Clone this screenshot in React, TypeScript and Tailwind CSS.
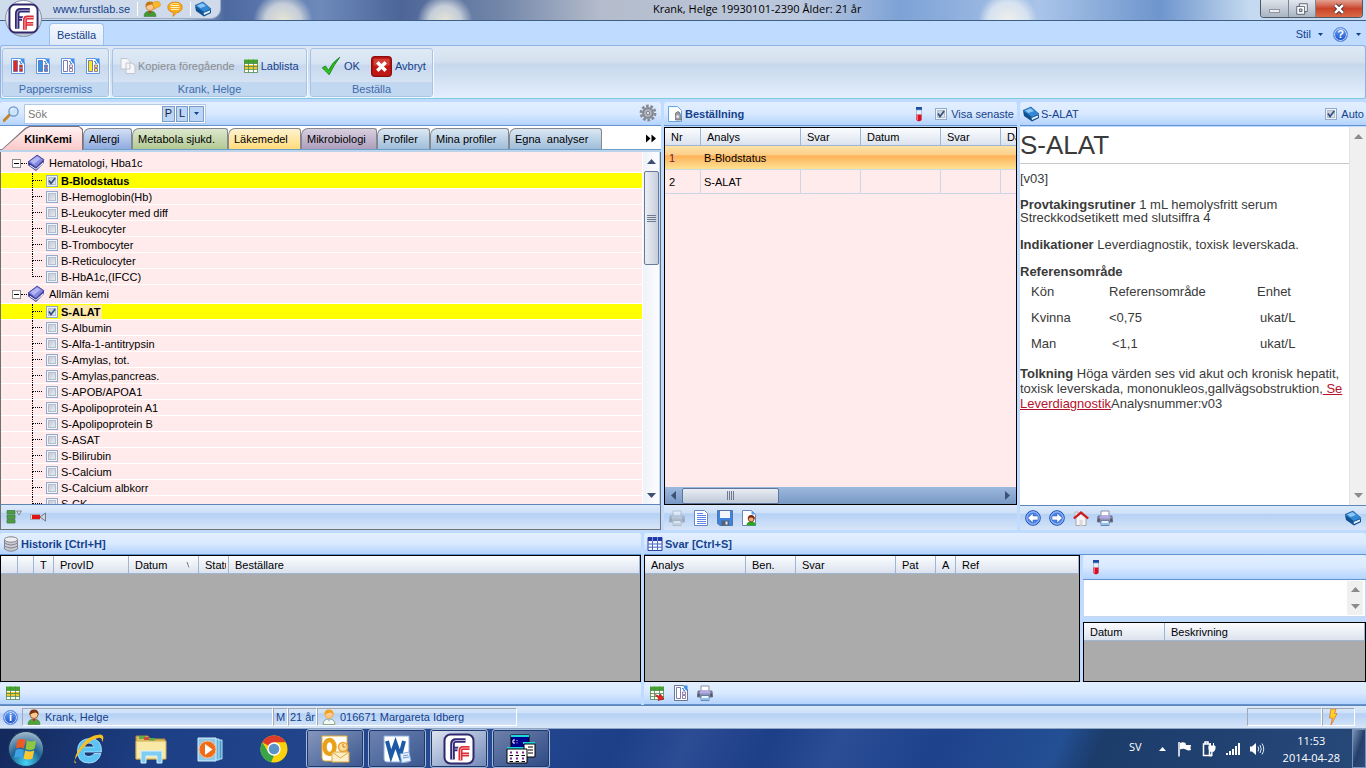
import { useState } from "react";
import type { ReactNode } from "react";

const barTop = "bg-gradient-to-b from-[#e3efff] via-[#d9e9ff] to-[#b3d3fe] border-b border-[#6593cf] rounded-t-[3px]";
const barFoot = "bg-[linear-gradient(#dbe9fb_0%,#cfe1f8_30%,#b5d1f5_36%,#d7e5f8_100%)]";
const headCell = "h-[18px] border-r border-b border-[#9eb6d3] bg-gradient-to-b from-[#fbfcfe] to-[#dce3ee] px-[6px] text-left font-normal";

function Svg({ size = 16, children, className = "" }: { size?: number; children: ReactNode; className?: string }) {
  return (
    <svg width={size} height={size} viewBox="0 0 16 16" className={"shrink-0 " + className} aria-hidden="true">
      {children}
    </svg>
  );
}

function FormIcon({ color, edge = "#5d97e0" }: { color: string; edge?: string }) {
  return (
    <Svg>
      <path d="M1.500 .5h9l4 4v11h-13z" fill="#fff" stroke={edge} />
      <path d="M3.500 2.500h4v11h-4z" fill={color} stroke="#6a6fae" strokeWidth=".9" />
      <path d="M9.500 7h3v2.500h-3zM9.500 10.500h3v3h-3z" fill={color} stroke="#8a6fa0" strokeWidth=".9" />
      <path d="M10 .5h4.500V6L12.500 5z" fill="#3f8ff0" />
      <path d="M9 3.500h1.500V5.500H12" fill="none" stroke="#4b86dd" />
    </Svg>
  );
}

function BookIcon({ dark = "#12518f", mid = "#3289d8", light = "#8cc8f7" }: { dark?: string; mid?: string; light?: string }) {
  return (
    <Svg>
      <path d="M0 5 8 9.500 16 9v3l-7 3.500L1 10z" fill={dark} />
      <path d="M8.500 11.500 15 9.500v1.700l-6 2.800z" fill="#e8f2fb" />
      <path d="M0 4.500 8 1l8 7-7 3.500z" fill={mid} stroke={dark} strokeWidth=".7" />
      <path d="M2 4.500 7.500 2.200 11 5 5.500 7z" fill={light} />
    </Svg>
  );
}

function CatalogIcon() {
  return (
    <Svg size={18}>
      <path d="M1 7 9 1l6 4v3l-7 7-7-5z" fill="#35378f" />
      <path d="M2.500 9.500 8 13l6.500-6v1.500L8 14l-5.500-3.500z" fill="#fff" />
      <path d="M1 7 9 1l6 4-7 7z" fill="#8589dc" stroke="#3d3fa0" strokeWidth=".8" />
      <path d="M3 6.500 9 2.200l3 2L6 9z" fill="#b3b6f2" />
    </Svg>
  );
}

function GridIcon({ arrow = false }: { arrow?: boolean }) {
  return (
    <Svg>
      <path d="M1 1.500h14v13H1z" fill="#fff" />
      <path d="M1 1.500h14v4H1z" fill="#43a52c" />
      {!arrow && <path d="M1 7h14v4H1z" fill="#f2c62e" />}
      <path d="M1 5.500h14M1 8.500h14M1 11.500h14M5.500 1.500v13M10.500 1.500v13M1.500 2v12M14.500 2v12M1 14.500h14" stroke="#4d8b4a" fill="none" strokeWidth=".8" />
      {arrow && <path d="M6 9.500 10 11l1.500-2L15 14l-6 1.500.5-2z" fill="#e8221c" stroke="#8e1513" strokeWidth=".5" />}
    </Svg>
  );
}

function TableIcon() {
  return (
    <Svg>
      <path d="M1 1.500h14v13H1z" fill="#f4f8ff" stroke="#2742a0" />
      <path d="M1 1.500h14v3.500H1z" fill="#2138a5" />
      <path d="M1 8h14M1 11.200h14M5.500 5v9.500M10.500 5v9.500" stroke="#4a68c0" />
      <path d="M5.500 1v4M10.500 1v4" stroke="#7b92dc" />
    </Svg>
  );
}

function TubeIcon() {
  return (
    <Svg>
      <path d="M5 1h6v3H5z" fill="#1c4fa4" />
      <path d="M5.500 4h5v10q-2.500 2.500-5 0z" fill="#e6f1fc" stroke="#94aac8" strokeWidth=".7" />
      <path d="M5.500 8.500h5v5.500q-2.500 2.500-5 0z" fill="#dc0d20" />
      <path d="M6.500 9v5" stroke="#f88" strokeWidth=".8" />
    </Svg>
  );
}

function PrinterIcon({ faded = false }: { faded?: boolean }) {
  return (
    <Svg className={faded ? "opacity-40 grayscale" : ""}>
      <path d="M4 1h8v6H4z" fill="#fff" stroke="#8b90a8" />
      <path d="M1 6h14l.5 6H.5z" fill="#8f93ae" stroke="#5d6078" strokeWidth=".8" />
      <path d="M3 5.500h10v3H3z" fill="#b3a9e8" />
      <path d="M.8 8.500h2v3h-2zM13.200 8.500h2v3h-2z" fill="#54566a" />
      <path d="M4 10.500h8v5H4z" fill="#e9f5ff" stroke="#50709a" strokeWidth=".8" />
      <path d="M5 13h6v2H5z" fill="#8cc3f2" />
    </Svg>
  );
}

function PersonIcon({ hair, coat, glasses = false }: { hair: string; coat: string; glasses?: boolean }) {
  return (
    <Svg>
      <path d="M2 15.500q0-5.500 6-5.500t6 5.500z" fill={coat} stroke="#4f7a44" strokeWidth=".6" />
      <circle cx="8" cy="5.500" r="4" fill="#fbc98f" stroke={hair} strokeWidth=".7" />
      <path d="M3.500 6Q3 .5 8 .5T12.500 6q-1-2.500-3-2.500-3 0-6 2.500z" fill={hair} />
      <path d="M6.500 10 8 13l1.500-3z" fill={glasses ? "#8fc4ee" : "#d22"} />
    </Svg>
  );
}

function BubbleIcon() {
  return (
    <Svg>
      <path d="M8 1c4.500 0 7.200 2 7.200 5.200S12.500 11.500 10 11.500L6 15.500l.5-4C2.800 11 .8 9 .8 6.200S3.500 1 8 1z" fill="#fdab1b" stroke="#d07a08" strokeWidth=".7" />
      <path d="M4 4.500h8M3.500 6.500h9M4 8.500h8" stroke="#fff3c0" />
      <path d="M3 4q4-3 9-1" stroke="#ffe08a" fill="none" />
    </Svg>
  );
}

function RoundArrow({ flip = false }: { flip?: boolean }) {
  return (
    <Svg className={flip ? "-scale-x-100" : ""}>
      <circle cx="8" cy="8" r="7.300" fill="#4c86ea" stroke="#1e4cae" />
      <circle cx="8" cy="8" r="6.200" fill="none" stroke="#a9c8fb" />
      <path d="M2.700 8 8 3v3h5v4H8v3z" fill="#fff" stroke="#1c4bae" strokeWidth=".5" />
    </Svg>
  );
}

function HomeIcon() {
  return (
    <Svg>
      <path d="M2 2h3v5H2z" fill="#eee" stroke="#999" strokeWidth=".6" />
      <path d="M3 8 8 4l5 4v7.500H3z" fill="#f5f5f5" stroke="#999" strokeWidth=".8" />
      <path d="M6.500 10h3v5.500h-3z" fill="#d9d9de" />
      <path d="m.8 8.500 7.200-6 7.200 6" fill="none" stroke="#d4171b" strokeWidth="2.200" />
    </Svg>
  );
}

function InfoIcon({ mark }: { mark: string }) {
  return (
    <span className="flex size-[15px] shrink-0 items-center justify-center rounded-full border border-[#5d86d8] bg-gradient-to-b from-[#6aa2f5] to-[#1b4dc8] text-[11px] font-bold leading-none text-white ring-1 ring-inset ring-[#c6dafb]">
      {mark}
    </span>
  );
}

function FFLogo({ size = 32 }: { size?: number }) {
  return (
    <svg width={size} height={size} viewBox="0 0 32 32" className="shrink-0" aria-hidden="true">
      <rect x="1.500" y="1.500" width="29" height="29" rx="6" fill="#fff" stroke="#30286a" strokeWidth="2" />
      <path d="M9.500 26.500V11q0-3.500 3.500-3.500h9.500M10 16h11" fill="none" stroke="#302775" strokeWidth="4.600" />
      <path d="M9.500 26.500V11q0-3.500 3.500-3.500h9.500M11.500 16H21" fill="none" stroke="#cdc9e2" strokeWidth=".9" />
      <path d="M17.500 28V17.500q0-2.500 2.500-2.500h7M18 21.500h8" fill="none" stroke="#fff" strokeWidth="6" />
      <path d="M17.500 27.500V17.500q0-2.500 2.500-2.500h6.500M18 21.500h8" fill="none" stroke="#e12c37" strokeWidth="4" />
      <path d="M17.500 27.500V17.500q0-2.500 2.500-2.500h6.500M19.500 21.500H26" fill="none" stroke="#fbd3d5" strokeWidth=".8" />
    </svg>
  );
}

function Triangle({ dir = "down", className = "fill-[#3c5175]" }: { dir?: "up" | "down" | "left" | "right"; className?: string }) {
  const d = { down: "M0 2h9L4.500 7z", up: "M0 7h9L4.500 2z", left: "M7 0v9L2 4.500z", right: "M2 0v9l5-4.500z" }[dir];
  return (
    <svg width="9" height="9" viewBox="0 0 9 9" className={"shrink-0 " + className} aria-hidden="true">
      <path d={d} />
    </svg>
  );
}

function SmallCaret() {
  return (
    <svg width="5" height="3" viewBox="0 0 5 3" className="fill-[#15428b]" aria-hidden="true">
      <path d="M0 0h5L2.500 3z" />
    </svg>
  );
}

function Check({ label, checked, bold, active, blue }: { label: string; checked?: boolean; bold?: boolean; active?: boolean; blue?: boolean }) {
  const [on, setOn] = useState(!!checked);
  return (
    <label className={"flex items-center whitespace-nowrap " + (blue ? "gap-[4px]" : "gap-[3px]")}>
      <span className="relative flex size-[12px] shrink-0">
        <input
          type="checkbox"
          checked={on}
          onChange={(e) => setOn(e.target.checked)}
          className="size-[12px] appearance-none border border-[#93abca] bg-gradient-to-br from-[#b9bfca] to-[#f4f5f8] shadow-[inset_0_0_0_1px_#eef3fa,inset_0_0_0_2px_#b4bfce]"
        />
        {on && (
          <svg viewBox="0 0 12 12" className="pointer-events-none absolute inset-0 size-[12px]" aria-hidden="true">
            <path d="m3 5.500 2 3L9.200 3" fill="none" stroke="#33507f" strokeWidth="1.700" />
          </svg>
        )}
      </span>
      <span className={(bold ? "font-bold " : "") + (active ? "bg-[#ffe9a8] pr-px" : "")}>{label}</span>
    </label>
  );
}

const groups = [
  {
    name: "Hematologi, Hba1c",
    items: ["B-Blodstatus", "B-Hemoglobin(Hb)", "B-Leukocyter med diff", "B-Leukocyter", "B-Trombocyter", "B-Reticulocyter", "B-HbA1c,(IFCC)"],
  },
  {
    name: "Allmän kemi",
    items: ["S-ALAT", "S-Albumin", "S-Alfa-1-antitrypsin", "S-Amylas, tot.", "S-Amylas,pancreas.", "S-APOB/APOA1", "S-Apolipoprotein A1", "S-Apolipoprotein B", "S-ASAT", "S-Bilirubin", "S-Calcium", "S-Calcium albkorr", "S-CK"],
  },
];
const ordered = ["B-Blodstatus", "S-ALAT"];

const tabs = [
  { name: "Allergi", cls: "w-[49px] from-[#d3dff5] to-[#8fabe0]" },
  { name: "Metabola sjukd.", cls: "w-[96px] from-[#dde8cd] to-[#b3ca93]" },
  { name: "Läkemedel", cls: "w-[73px] from-[#fff3cf] to-[#ffdb78]" },
  { name: "Mikrobiologi", cls: "w-[76px] from-[#d8cfe0] to-[#ae9fbc]" },
  { name: "Profiler", cls: "w-[53px] from-[#dbe8f3] to-[#9fbdda]" },
  { name: "Mina profiler", cls: "w-[79px] from-[#dbe8f3] to-[#9fbdda]" },
  { name: "Egna  analyser", cls: "w-[93px] from-[#dbe8f3] to-[#9fbdda]" },
];

function Tree() {
  return (
    <ul className="min-w-0 flex-1 overflow-hidden bg-[#ffebeb] pt-[2px]">
      {groups.map((g) => (
        <li key={g.name}>
          <div className="flex h-[19px] items-center border-b border-white pl-[11px]">
            <button aria-label={"Fäll ihop " + g.name} className="flex size-[9px] items-center justify-center border border-[#8a8a8a] bg-white">
              <span className="h-px w-[5px] bg-black" />
            </button>
            <span className="h-px w-[6px] border-t border-dotted border-black" />
            <CatalogIcon />
            <span className="ml-[4px]">{g.name}</span>
          </div>
          <ul>
            {g.items.map((name, i) => {
              const sel = ordered.includes(name);
              const last = i === g.items.length - 1;
              return (
                <li key={name} className={"flex h-[16px] items-center border-b border-white pl-[31px] " + (sel ? "bg-[#ffff00]" : "")}>
                  <span className="mr-[4px] flex h-full w-[10px] flex-col" aria-hidden="true">
                    <span className="flex-1 border-b border-l border-dotted border-black" />
                    <span className={"flex-1 " + (last ? "" : "border-l border-dotted border-black")} />
                  </span>
                  <Check label={name} checked={sel} bold={sel} active={name === "S-ALAT"} />
                </li>
              );
            })}
          </ul>
        </li>
      ))}
    </ul>
  );
}

function Catalog() {
  return (
    <section className="flex min-h-0 flex-col">
      <div className={"flex h-[24px] shrink-0 items-center px-[3px] " + barTop}>
        <Svg>
          <path d="m1 14.500 6-6" stroke="#c98526" strokeWidth="3" strokeLinecap="round" />
          <circle cx="10.500" cy="5.500" r="4.600" fill="#cbe5fb" stroke="#6b93cf" strokeWidth="1.300" />
          <path d="M8 5q.5-2 2.500-2.300" stroke="#fff" fill="none" />
        </Svg>
        <div className="ml-[5px] flex h-[20px] w-[182px] items-center gap-px border border-[#b3c9e6] bg-white pr-px">
          <input aria-label="Sök" placeholder="Sök" className="min-w-0 flex-1 bg-transparent pl-[3px] outline-none placeholder:text-[#777]" />
          <button className="h-[16px] w-[13px] border border-[#7a9cc8] bg-[#bcd6f7] leading-none text-[#223]">P</button>
          <button className="h-[16px] w-[12px] border border-[#7a9cc8] bg-[#bcd6f7] leading-none text-[#223]">L</button>
          <button aria-label="Sökalternativ" className="flex h-[16px] w-[15px] items-center justify-center border border-[#7a9cc8] bg-[#bcd6f7]">
            <SmallCaret />
          </button>
        </div>
        <button aria-label="Inställningar" className="mr-px mb-[2px] ml-auto">
          <Svg size={18}>
            <circle cx="8" cy="8" r="6.300" fill="none" stroke="#858993" strokeWidth="2.400" strokeDasharray="2.400 1.560" />
            <circle cx="8" cy="8" r="4.300" fill="#b4b8c2" stroke="#858993" strokeWidth="2" />
            <circle cx="8" cy="8" r="1.500" fill="#e2e4ea" stroke="#686c78" strokeWidth=".7" />
          </Svg>
        </button>
      </div>
      <div className="flex h-[26px] shrink-0 items-end border-b-2 border-[#bcd3ec] bg-white pl-px shadow-[inset_0_-1px_#6d9fc8]">
        <button className="h-[24px] w-[82px] shrink-0 bg-[#7d7078] pb-px pl-px font-bold [clip-path:polygon(0_100%,24px_2px,28px_0,78px_0,100%_3px,100%_100%)]">
          <span className="mt-px mr-px flex h-[23px] items-center justify-center bg-gradient-to-b from-[#fff2f2] to-[#fac9c9] pl-[12px] [clip-path:polygon(0_100%,24px_2px,28px_0,77px_0,100%_3px,100%_100%)]">
            KlinKemi
          </span>
        </button>
        {tabs.map((t) => (
          <button key={t.name} className={"mb-px h-[21px] shrink-0 whitespace-pre rounded-tl-[7px] rounded-tr-[3px] border border-b-0 border-[#85888e] bg-gradient-to-b pl-[5px] text-left " + t.cls}>
            {t.name}
          </button>
        ))}
        <button aria-label="Fler flikar" className="mr-[4px] mb-[7px] ml-auto flex">
          <svg width="12" height="9" viewBox="0 0 12 9" aria-hidden="true">
            <path d="M1 .5v8l4.500-4zM6.500 .5v8l4.500-4z" />
          </svg>
        </button>
      </div>
      <div className="flex min-h-0 flex-1 border-x border-[#707070]">
        <Tree />
        <div className="mr-px flex w-[17px] flex-col items-center border-l border-white bg-gradient-to-r from-[#eff2f8] to-[#fdfdff] pt-[5px] pb-[4px]" aria-hidden="true">
          <Triangle dir="up" />
          <div className="mt-[5px] flex h-[94px] w-[15px] flex-col items-center justify-center gap-px rounded-[2px] border border-[#6b7a99] bg-gradient-to-r from-[#eceff5] to-[#c6cedb]">
            <span className="h-px w-[9px] bg-[#6c7a92]" />
            <span className="h-px w-[9px] bg-[#6c7a92]" />
            <span className="h-px w-[9px] bg-[#6c7a92]" />
            <span className="h-px w-[9px] bg-[#6c7a92]" />
          </div>
          <span className="flex-1" />
          <Triangle />
        </div>
      </div>
      <div className={"flex h-[26px] shrink-0 items-center gap-[8px] border border-[#707070] border-t-[#5e86b8] px-[5px] " + barFoot}>
        <button aria-label="Fäll ut">
          <Svg>
            <path d="M1 1.500h8v3.500H1zM1 6h8v3.500H1zM1 10.500h8V14H1z" fill="#4d9e42" stroke="#4a7d48" strokeWidth=".8" />
            <path d="M10.500 2h5l-2.500 4z" fill="#d6dcd6" stroke="#667" strokeWidth=".7" />
          </Svg>
        </button>
        <button aria-label="Rensa">
          <Svg>
            <path d="M.5 5.500h9v5h-9z" fill="#ddd" stroke="#888" strokeWidth=".6" />
            <path d="M2 6h8v4H2z" fill="#e3140f" />
            <path d="m15.500 4-5.500 4 5.500 4z" fill="#ccd3de" stroke="#556" strokeWidth=".7" />
          </Svg>
        </button>
      </div>
    </section>
  );
}

function Order() {
  return (
    <section className="flex min-h-0 min-w-0 flex-col">
      <div className={"flex h-[24px] shrink-0 items-center px-[3px] text-[#15428b] " + barTop}>
        <Svg>
          <path d="M1.500 .5h9l4 4v11h-13z" fill="#fff" stroke="#5fa6e6" />
          <path d="M8.500 7q3-3 4.500 0l1.500 7h-6z" fill="#9a9da3" stroke="#666" strokeWidth=".7" />
          <circle cx="10.700" cy="10.500" r="1.500" fill="#e5e5e5" />
        </Svg>
        <h2 className="ml-[2px] font-bold">Beställning</h2>
        <span className="mr-[8px] ml-auto"><TubeIcon /></span>
        <Check label="Visa senaste" checked blue />
      </div>
      <div className="mt-px flex min-h-0 flex-1 flex-col overflow-hidden border border-black bg-[#ffebeb]">
        <div className="min-h-0 flex-1 overflow-hidden">
          <table className="w-[416px] table-fixed border-separate border-spacing-0">
            <colgroup>
              <col className="w-[36px]" />
              <col className="w-[100px]" />
              <col className="w-[60px]" />
              <col className="w-[80px]" />
              <col className="w-[60px]" />
              <col className="w-[80px]" />
            </colgroup>
            <thead>
              <tr>
                {["Nr", "Analys", "Svar", "Datum", "Svar", "Datum"].map((h, i) => (
                  <th key={i} className={headCell}>{h}</th>
                ))}
              </tr>
            </thead>
            <tbody>
              <tr className="bg-[linear-gradient(#fde3a8_0%,#fcd08a_35%,#feb257_42%,#fdc673_65%,#fee695_100%)]">
                <td className="h-[24px] border-b border-[#d0d8e4] px-[4px] text-[#7a1538]">1</td>
                <td className="border-b border-[#d0d8e4] px-[3px]">B-Blodstatus</td>
                <td colSpan={4} className="border-b border-[#d0d8e4]" />
              </tr>
              <tr>
                <td className="h-[24px] border-r border-b border-[#ccd6e6] px-[4px]">2</td>
                <td className="border-r border-b border-[#ccd6e6] px-[3px]">S-ALAT</td>
                <td className="border-r border-b border-[#ccd6e6]" />
                <td className="border-r border-b border-[#ccd6e6]" />
                <td className="border-r border-b border-[#ccd6e6]" />
                <td className="border-r border-b border-[#ccd6e6]" />
              </tr>
            </tbody>
          </table>
        </div>
        <div className="flex h-[17px] shrink-0 items-center justify-between bg-gradient-to-b from-[#9db9de] to-[#7898c4] px-[4px]" aria-hidden="true">
          <Triangle dir="left" />
          <div className="mr-auto ml-[4px] flex h-[16px] w-[97px] items-center justify-center gap-px rounded-[2px] border border-[#5f759b] bg-gradient-to-b from-[#e9edf3] to-[#bfc9d8]">
            <span className="h-[9px] w-px bg-[#6c7a92]" />
            <span className="h-[9px] w-px bg-[#6c7a92]" />
            <span className="h-[9px] w-px bg-[#6c7a92]" />
            <span className="h-[9px] w-px bg-[#6c7a92]" />
          </div>
          <Triangle dir="right" />
        </div>
      </div>
      <div className={"flex h-[25px] shrink-0 items-center gap-[8px] px-[5px] " + barFoot}>
        <button aria-label="Skriv ut"><PrinterIcon faded /></button>
        <button aria-label="Lista">
          <Svg>
            <path d="M1.500 .5h10l3 3v12h-13z" fill="#fff" stroke="#6b86bd" />
            <path d="M4 3.500h6M4 5.500h9M4 7.500h9M4 9.500h9M4 11.500h9M4 13.500h9" stroke="#5c86ea" />
          </Svg>
        </button>
        <button aria-label="Spara">
          <Svg>
            <path d="M.5 .5h15v15H3l-2.500-2z" fill="#3f83dd" stroke="#5577a8" />
            <path d="M3 1h10v7H3z" fill="#f3f7fd" />
            <path d="M4.500 10.500h7.500v5H4.500z" fill="#566377" />
            <path d="M8.500 11.500h2v3h-2z" fill="#e8ecf2" />
          </Svg>
        </button>
        <button aria-label="Patientsvar">
          <Svg>
            <path d="M1.500 .5h9l4 4v11h-13z" fill="#fff" stroke="#6b86bd" />
            <path d="M10.500 .5v4h4z" fill="#5ba2ee" />
            <path d="M5.500 15.500q0-4 4.500-4t5 4z" fill="#2ea51f" />
            <circle cx="10.200" cy="9" r="2.800" fill="#f2ae78" stroke="#6e260b" strokeWidth=".8" />
            <path d="M6.800 9.500Q6.500 5 10.200 5t3.800 4.500Q12 7.500 10 7.500t-3.200 2z" fill="#7e2c0d" />
          </Svg>
        </button>
      </div>
    </section>
  );
}

function Article() {
  return (
    <section className="flex min-h-0 min-w-0 flex-col">
      <div className={"flex h-[24px] shrink-0 items-center pr-[2px] pl-[3px] text-[#15428b] " + barTop}>
        <BookIcon />
        <span className="ml-[2px]">S-ALAT</span>
        <span className="ml-auto"><Check label="Auto" checked blue /></span>
      </div>
      <div className="mt-px flex min-h-0 flex-1 bg-white">
        <article className="min-w-0 flex-1 overflow-hidden text-[13px] leading-[15px] text-[#3a3a3a]">
          <h1 className="h-[37px] border-b border-[#c8c8c8] text-[26px] leading-[36px]">S-ALAT</h1>
          <p className="mt-[7px]">[v03]</p>
          <p className="mt-[12px] leading-[13px]"><b>Provtakingsrutiner</b> 1 mL hemolysfritt serum<br />Streckkodsetikett med slutsiffra 4</p>
          <p className="mt-[13px]"><b>Indikationer</b> Leverdiagnostik, toxisk leverskada.</p>
          <h2 className="mt-[12px] font-bold">Referensområde</h2>
          <table className="-mt-px mb-px ml-[11px] table-fixed text-left">
            <thead>
              <tr className="h-[26px]">
                <th className="w-[78px] font-normal">Kön</th>
                <th className="w-[148px] font-normal">Referensområde</th>
                <th className="font-normal">Enhet</th>
              </tr>
            </thead>
            <tbody>
              <tr className="h-[26px]"><td>Kvinna</td><td>&lt;0,75</td><td className="pl-[3px]">ukat/L</td></tr>
              <tr className="h-[26px]"><td>Man</td><td className="pl-[3px]">&lt;1,1</td><td className="pl-[3px]">ukat/L</td></tr>
            </tbody>
          </table>
          <p className="mt-[10px]">
            <b>Tolkning</b> Höga värden ses vid akut och kronisk hepatit, toxisk leverskada, mononukleos,gallvägsobstruktion,
            <a href="#leverdiagnostik" className="text-[#b5122b] underline"> Se Leverdiagnostik</a>Analysnummer:v03
          </p>
        </article>
        <div className="flex w-[17px] flex-col items-center justify-between border-l border-[#e2e2e2] bg-[#f0f0f0] py-[5px]" aria-hidden="true">
          <Triangle dir="up" className="fill-[#8b8b8b]" />
          <Triangle className="fill-[#8b8b8b]" />
        </div>
      </div>
      <div className={"flex h-[25px] shrink-0 items-center gap-[8px] border-t border-[#5e86b8] px-[5px] " + barFoot}>
        <button aria-label="Bakåt"><RoundArrow /></button>
        <button aria-label="Framåt"><RoundArrow flip /></button>
        <button aria-label="Hem"><HomeIcon /></button>
        <button aria-label="Skriv ut artikel"><PrinterIcon /></button>
        <button aria-label="Handbok" className="ml-auto"><BookIcon /></button>
      </div>
    </section>
  );
}

function HeadTable({ cols }: { cols: { name: ReactNode; w: string }[] }) {
  return (
    <table className="w-full table-fixed border-separate border-spacing-0 whitespace-nowrap">
      <thead>
        <tr>
          {cols.map((c, i) => (
            <th key={i} className={headCell + " overflow-hidden " + c.w}>{c.name}</th>
          ))}
        </tr>
      </thead>
    </table>
  );
}

function Bottom() {
  return (
    <div className="grid h-[172px] shrink-0 grid-cols-[641fr_722fr] gap-[3px]">
      <section className="flex min-w-0 flex-col">
        <div className={"flex h-[22px] shrink-0 items-center px-[3px] pt-px text-[#15428b] " + barTop}>
          <Svg>
            <path d="M1.500 3.500v9.500q6.500 4.500 13 0V3.500z" fill="#c9cad2" stroke="#83858f" />
            <ellipse cx="8" cy="3.500" rx="6.500" ry="2.700" fill="#eeeef2" stroke="#83858f" />
            <path d="M1.500 7q6.500 4 13 0M1.500 10q6.500 4 13 0" fill="none" stroke="#83858f" />
          </Svg>
          <h2 className="ml-[2px] font-bold">Historik [Ctrl+H]</h2>
        </div>
        <div className="flex-1 border border-black bg-[#ababab]">
          <HeadTable
            cols={[
              { name: "", w: "w-[17px]" },
              { name: "", w: "w-[16px]" },
              { name: "T", w: "w-[20px]" },
              { name: "ProvID", w: "w-[75px]" },
              {
                name: (
                  <span className="flex items-center justify-between">
                    Datum
                    <svg width="6" height="6" viewBox="0 0 6 6" aria-hidden="true"><path d="m1 0 2 5.500L5 0" fill="none" stroke="#fff" /><path d="m1 0 2 5.500" stroke="#777" /></svg>
                  </span>
                ),
                w: "w-[70px]",
              },
              { name: <span className="block overflow-hidden">Status</span>, w: "w-[30px] pr-[2px]" },
              { name: "Beställare", w: "" },
            ]}
          />
        </div>
        <div className={"flex h-[23px] shrink-0 items-center px-[5px] " + barTop}>
          <button aria-label="Historiklista"><GridIcon /></button>
        </div>
      </section>
      <section className="flex min-w-0 flex-col">
        <div className={"flex h-[22px] shrink-0 items-center px-[3px] pt-px text-[#15428b] " + barTop}>
          <TableIcon />
          <h2 className="ml-[2px] font-bold">Svar [Ctrl+S]</h2>
        </div>
        <div className="grid min-h-0 flex-1 grid-cols-[436fr_283fr] gap-[3px]">
          <div className="border border-black bg-[#ababab]">
            <HeadTable
              cols={[
                { name: "Analys", w: "w-[101px]" },
                { name: "Ben.", w: "w-[50px]" },
                { name: "Svar", w: "w-[100px]" },
                { name: "Pat", w: "w-[40px]" },
                { name: "A", w: "w-[20px]" },
                { name: "Ref", w: "" },
              ]}
            />
          </div>
          <div className="flex min-h-0 flex-col">
            <div className={"flex h-[25px] shrink-0 items-center px-[5px] " + barTop}><TubeIcon /></div>
            <div className="flex h-[37px] shrink-0 border border-t-0 border-[#c6d9f1] bg-white">
              <textarea aria-label="Provkommentar" className="min-w-0 flex-1 resize-none outline-none" />
              <div className="my-px mr-[2px] flex w-[16px] flex-col items-center justify-between bg-[#f0f0f0] py-[4px]" aria-hidden="true">
                <Triangle dir="up" className="fill-[#8b8b8b]" />
                <Triangle className="fill-[#8b8b8b]" />
              </div>
            </div>
            <div className="mt-[5px] flex-1 border border-black bg-[#ababab]">
              <HeadTable cols={[{ name: "Datum", w: "w-[81px]" }, { name: "Beskrivning", w: "" }]} />
            </div>
          </div>
        </div>
        <div className={"flex h-[23px] shrink-0 items-center gap-[8px] px-[5px] " + barTop}>
          <button aria-label="Exportera"><GridIcon arrow /></button>
          <button aria-label="Remiss"><FormIcon color="#fff" edge="#6b7690" /></button>
          <button aria-label="Skriv ut svar"><PrinterIcon /></button>
        </div>
      </section>
    </div>
  );
}

function StatusBar() {
  const cell = "flex h-[18px] items-center border border-t-[#a3a8b0] border-r-white border-b-white border-l-[#a3a8b0]";
  return (
    <footer className={"flex h-[23px] shrink-0 items-center border-t border-[#5e86b8] pr-[11px] pl-[3px] text-[#15428b] " + barFoot}>
      <InfoIcon mark="i" />
      <div className={cell + " ml-[4px] w-[251px] gap-[3px] pl-[3px]"}><PersonIcon hair="#7a3413" coat="#4aa63b" />Krank, Helge</div>
      <div className={cell + " w-[15px] justify-center"}>M</div>
      <div className={cell + " w-[29px] justify-center whitespace-nowrap"}>21 år</div>
      <div className={cell + " w-[200px] gap-[3px] pl-[3px]"}><PersonIcon hair="#f1a21d" coat="#f4f8f4" glasses />016671 Margareta Idberg</div>
      <div className={cell + " ml-auto w-[75px]"} />
      <div className={cell + " w-[33px] justify-center pr-[12px]"}>
        <Svg><path d="M6 0h5L9.500 4.500h2.500L6 16l1.500-7H4.500z" fill="#ffd42a" stroke="#e8792a" strokeWidth=".9" /></Svg>
      </div>
    </footer>
  );
}

function Taskbar() {
  const win = "flex h-[39px] w-[58px] items-center justify-center rounded-[3px] border border-[#a5b8d8] shadow-[inset_0_0_0_1px_#1d3a70]";
  return (
    <nav className="flex h-[40px] shrink-0 items-center border-t border-[#8ea6c4] bg-[linear-gradient(115deg,#14295c_0%,#1d3f85_12%,#274a91_35%,#1c3f88_45%,#2c4c94_50%,#1d3f88_56%,#2b4d96_61%,#1e428c_68%,#234f94_77%,#1c3c6a_80%,#27497a_100%)] font-['Open_Sans',sans-serif] text-white">
      <button aria-label="Start" className="ml-[7px]">
        <svg width="38" height="38" viewBox="0 0 38 38" aria-hidden="true">
          <defs>
            <radialGradient id="orb" cx=".5" cy=".9" r=".9">
              <stop offset="0" stopColor="#45d5f5" /><stop offset=".5" stopColor="#1f6397" /><stop offset="1" stopColor="#a5bccd" />
            </radialGradient>
          </defs>
          <circle cx="19" cy="19" r="17.500" fill="url(#orb)" stroke="#173252" />
          <path d="M10.500 10q4-2 8 0l-1.500 8.500q-4-2-8 0z" fill="#ee5a24" />
          <path d="M20 10.500q4 2 9 0L27.500 19q-4 2-9 0z" fill="#8fc73e" />
          <path d="M8.700 20q4-2 8 0l-1.500 8q-4-2-8 0z" fill="#3fa2e5" />
          <path d="M18.200 20.500q4 2 9 0L25.500 28.500q-4 2-9 0z" fill="#fdc82f" />
        </svg>
      </button>
      <button aria-label="Internet Explorer" className="ml-[28px]">
        <svg width="32" height="32" viewBox="0 0 32 32" aria-hidden="true">
          <path d="M28 20.500h-7q-1.500 3-5 3-5 0-5-4.500h17.500Q29 5.500 17 5.500 4.500 6 4.500 18T16 30q9 0 12-9.500zM11 14q1-4 5-4t5 4z" fill="#5cc3f5" stroke="#b9e8ff" strokeWidth=".8" />
          <path d="M3.500 30Q-1 27 7 14.500T27 1.500q5.500.5 2 8Q29.500 4 25 5 15 7.500 6.500 19.500T3.500 30z" fill="#f5bf24" />
        </svg>
      </button>
      <button aria-label="Utforskaren" className="ml-[29px]">
        <svg width="34" height="32" viewBox="0 0 34 32" aria-hidden="true">
          <path d="M2 3h12l2 3h15v20H2z" fill="#e3bf60" stroke="#a98834" />
          <path d="M5 3h6v3H5zM15 5h6v3h-6z" fill="#5fa94d" />
          <path d="M10 4h5v3h-5z" fill="#d34b3d" />
          <path d="M2 8h30v18H2z" fill="#f9e9a6" stroke="#cfae59" />
          <path d="M7 30V18h21v12h-5v-7H12v7z" fill="#7fcdf0" stroke="#d3f1ff" />
        </svg>
      </button>
      <button aria-label="Mediaspelare" className="ml-[28px]">
        <svg width="30" height="30" viewBox="0 0 30 30" aria-hidden="true">
          <path d="M10 6h16v19H10z" fill="#4a9ccc" stroke="#b8e2f7" />
          <path d="M6 5h17v21H6z" fill="#63b0dc" stroke="#b8e2f7" />
          <path d="M2 4h18v23H2z" fill="#8fcbe9" stroke="#d6effb" />
          <circle cx="11.500" cy="15.500" r="8.500" fill="#ef6c19" stroke="#fbc29a" />
          <path d="M9 10v11l7.500-5.500z" fill="#fff" />
        </svg>
      </button>
      <button aria-label="Chrome" className="ml-[34px]">
        <svg width="28" height="28" viewBox="0 0 28 28" aria-hidden="true">
          <circle cx="14" cy="14" r="13.500" fill="#fbd20c" />
          <path d="M14 14 2.300 7.200A13.500 13.500 0 0 1 25.700 7.200H14z" fill="#df3b2d" />
          <path d="M2.300 7.200 8.500 17.500l5.500 3-3 6.700A13.500 13.500 0 0 1 2.300 7.200z" fill="#3aa546" />
          <circle cx="14" cy="14" r="6.700" fill="#fff" /><circle cx="14" cy="14" r="5.300" fill="#5b93c9" />
        </svg>
      </button>
      <div className="ml-[18px] flex gap-[4px]">
        <button aria-label="Outlook" className={win + " bg-gradient-to-br from-[#8898bd] to-[#3b578e]"}>
          <svg width="30" height="30" viewBox="0 0 30 30" aria-hidden="true">
            <path d="M2 2h25v25H5q-3 0-3-3z" fill="#fff" stroke="#e6af35" />
            <ellipse cx="9.500" cy="13" rx="5" ry="7" fill="none" stroke="#e9a119" strokeWidth="4.500" />
            <path d="M12 18h17v10H12z" fill="#fcefc9" stroke="#dfa93b" /><path d="m12 18 8.500 6 8.500-6" fill="none" stroke="#dfa93b" />
            <circle cx="23" cy="13" r="4.500" fill="#f9dd9f" stroke="#e8a32c" strokeWidth="1.500" /><path d="M23 10v3h2.500" stroke="#c98311" fill="none" />
          </svg>
        </button>
        <button aria-label="Word" className={win + " bg-gradient-to-br from-[#6f83b3] to-[#3b578e]"}>
          <svg width="30" height="30" viewBox="0 0 30 30" aria-hidden="true">
            <path d="M2 2h25v26H5q-3 0-3-3z" fill="#fff" stroke="#87aede" />
            <path d="m5 7 4 15 4.500-13L18 22l4-15" fill="none" stroke="#1c5aa8" strokeWidth="4" />
            <path d="m18 20 9-2 2 9-9 2z" fill="#e9f2fc" stroke="#7da5d8" /><path d="m21 22 5-1M21 24l6-1" stroke="#6d96cc" />
          </svg>
        </button>
        <button aria-label="Fürst" className={win + " bg-gradient-to-br from-[#e0e6f1] to-[#7088b7]"}><FFLogo /></button>
        <button aria-label="Terminal" className={win + " bg-gradient-to-br from-[#7082ab] to-[#2d4a85]"}>
          <svg width="30" height="30" viewBox="0 0 30 30" aria-hidden="true">
            <path d="M5 1h18v13H5z" fill="#00008c" stroke="#000" /><path d="M5 1h18v2H5zM17 8h12v2H17zM1 13h20v2H1z" fill="#19d7dc" />
            <path d="M9 6H7v3h2M11 6v.8M11 8.500v.8" fill="none" stroke="#fff" /><path d="M18 10h11v13H18z" fill="#fff" stroke="#000" /><path d="M22 13h5M22 16h5M22 19h5" stroke="#000" />
            <path d="M1 15h20v14H1z" fill="#fff" stroke="#000" /><path d="M4 17.500h2v2H4zM10 17.500h2v2h-2zM16 17.500h2v2h-2zM4 23.500h2v2H4zM10 23.500h2v2h-2zM16 23.500h2v2h-2z" fill="#7b2a86" />
            <path d="M3.500 21.500h3.500M9.500 21.500H13M15.500 21.500H19M3.500 27.500h3.500M9.500 27.500H13M15.500 27.500H19" stroke="#000" />
          </svg>
        </button>
      </div>
      <span className="mb-[4px] ml-auto text-[11px]">SV</span>
      <div className="ml-[17px] flex items-center gap-[8px]">
        <svg width="7" height="4" viewBox="0 0 7 4" fill="#fff" className="mr-[3px]" aria-hidden="true"><path d="M0 4h7L3.500 0z" /></svg>
        <Svg><path d="M2 1v14.500" stroke="#fff" strokeWidth="1.500" /><path d="M3 2q3-1.500 5.500 0L9 4h5q-1 3 0 5-3 1-5-.5Q6 7 3 8.500z" fill="#fff" /></Svg>
        <Svg><path d="M2.500 3h6v11.500h-6zM4 1h3v2H4z" fill="none" stroke="#fff" strokeWidth="1.500" /><path d="M8 5h6v3q-1 3-3 3T8 8zM9.500 2v3M12.500 2v3M11 11v4H8.500" fill="#fff" stroke="#fff" /></Svg>
        <Svg><path d="M1 12h2v2H1zM4 10h2v4H4zM7 8h2v6H7zM10 5h2v9h-2zM13 2h2v12h-2z" fill="#fff" /></Svg>
        <Svg><path d="M1 5.500h2L7 2v12l-4-3.500H1z" fill="#fff" /><path d="M9 5.500q1.500 2.500 0 5M11 4q2.500 4 0 8M13 2.500q3.500 5.500 0 11" fill="none" stroke="#dfe8f4" /></Svg>
      </div>
      <time className="ml-[18px] text-center text-[11px] leading-[17px]">11:53<br />2014-04-28</time>
      <button aria-label="Visa skrivbordet" className="ml-[12px] h-[39px] w-[14px] border border-[#7690b8] bg-gradient-to-br from-[#7d93b5] via-[#243f6c] to-[#2c4b7c]" />
    </nav>
  );
}

function RibbonGroup({ title, children, cls }: { title: string; children: ReactNode; cls: string }) {
  return (
    <div className={"flex flex-col overflow-hidden rounded-[3px] border border-[#a9c3e4] bg-[linear-gradient(#e0eaf6_0%,#d6e3f2_30%,#c8d8ed_36%,#e0ebf9_100%)] shadow-[1px_1px_#f2f8ff] " + cls}>
      <div className="flex min-h-0 flex-1 items-center pt-px">{children}</div>
      <div className="h-[14px] bg-[#c2d8f1] text-center leading-[14px] text-[#3e6aaa]">{title}</div>
    </div>
  );
}

export default function App() {
  return (
    <div className="flex h-screen min-h-[600px] flex-col overflow-hidden bg-[#bfdbff] font-['Liberation_Sans',Arial,sans-serif] text-[11px] leading-[14px] text-black">
      <header className="relative flex h-[21px] shrink-0 items-start border-b border-[#3f6084] bg-[radial-gradient(circle_at_283px_22px,#e8e6d6_0px,#c5cdd8_18px,transparent_30px),radial-gradient(circle_at_445px_22px,#e8e6d6_0px,#c5cdd8_16px,transparent_28px),radial-gradient(circle_at_1008px_22px,#f1f1ea_0px,#d6e2f0_20px,transparent_30px),linear-gradient(90deg,#cfdceb_0px,#c4d2e6_180px,#4c68a0_225px,#6d8abb_320px,#4d6598_400px,#7286a9_500px,#b4bccb_600px,#bcc9de_800px,#7ea2d6_900px,#a9c4e8_1040px,#6e95cd_1160px,#c5daf0_1250px)]">
        <div className="ml-[36px] flex h-[19px] w-[185px] items-center rounded-br-[10px] border-r border-b border-[#9cacc2] bg-[#cfdbeb] pl-[17px] text-[#15428b]">
          <a href="#furstlab">www.furstlab.se</a>
          <span className="mx-[4px] ml-[7px] h-[14px] w-px bg-white" />
          <button aria-label="Kontakt" className="relative">
            <PersonIcon hair="#c4761b" coat="#3f9b2f" />
            <svg width="9" height="9" viewBox="0 0 16 16" className="absolute top-0 -right-[3px]" aria-hidden="true"><path d="M8 1c5 0 7 2 7 5s-3 5.500-6 5.500L4 15l1-4C2 10 1 8.500 1 6s2-5 7-5z" fill="#fdb92c" stroke="#d98b12" /></svg>
          </button>
          <button aria-label="Meddelanden" className="ml-[9px]"><BubbleIcon /></button>
          <span className="mr-[4px] ml-[7px] h-[14px] w-px bg-white" />
          <button aria-label="Handbok"><BookIcon /></button>
        </div>
        <h1 className="flex-1 pl-[432px] whitespace-nowrap font-['Open_Sans',sans-serif] text-[11px] leading-[18px]">Krank, Helge 19930101-2390 Ålder: 21 år</h1>
        <div className="mr-[3px] flex h-[18px] overflow-hidden rounded-b-[4px] border border-t-0 border-[#4e5866]">
          <button aria-label="Minimera" className="flex w-[28px] items-center justify-center border-r border-[#7b8695] bg-gradient-to-b from-[#dde3ea] to-[#a9b4c2]">
            <span className="mt-[4px] h-[4px] w-[11px] border border-[#8c95a1] bg-[#eee]" />
          </button>
          <button aria-label="Återställ" className="flex w-[27px] items-center justify-center border-r border-[#7b8695] bg-gradient-to-b from-[#e2e7ee] to-[#a9b4c2]">
            <Svg size={14}><path d="M5 2h9v9H5z" fill="#fff" stroke="#4c5563" /><path d="M2 5h9v9H2z" fill="#fff" stroke="#4c5563" /><path d="M5 8h3v3H5z" fill="#ccc" stroke="#4c5563" /></Svg>
          </button>
          <button aria-label="Stäng" className="flex w-[46px] items-center justify-center bg-gradient-to-b from-[#e3a092] via-[#c9432a] to-[#d96a45]">
            <Svg size={14}><path d="m3.500 3.500 9 9M12.500 3.500l-9 9" stroke="#4c2b2b" strokeWidth="5" /><path d="m3.500 3.500 9 9M12.500 3.500l-9 9" stroke="#fff" strokeWidth="3" /></Svg>
          </button>
        </div>
        <button aria-label="Programmeny" className="absolute top-0 left-[5px] z-10 flex size-[37px] items-center justify-center rounded-full border border-[#8795aa] bg-gradient-to-b from-[#fff] to-[#b9c5d6]"><FFLogo size={31} /></button>
      </header>
      <div className="flex h-[24px] shrink-0 items-end pr-[5px] pl-[49px] text-[#15428b]">
        <button className="h-[22px] w-[55px] rounded-t-[4px] border border-b-0 border-[#9ec0ee] bg-gradient-to-b from-[#f3f8fe] to-[#dfeaf7]">Beställa</button>
        <div className="ml-auto flex h-full items-center pt-[2px]">
          <button className="flex items-center gap-[7px]">Stil <SmallCaret /></button>
          <button aria-label="Hjälp" className="ml-[10px] flex items-center gap-[8px]"><InfoIcon mark="?" /><SmallCaret /></button>
        </div>
      </div>
      <div className="mb-[3px] flex h-[54px] shrink-0 gap-[3px] rounded-[3px] border border-t-[#8db2e3] border-r-[#8db2e3] border-b-[#7ecbe0] border-l-[#8db2e3] bg-[linear-gradient(#dfe9f5_0%,#d4e0ef_30%,#c7d7ec_36%,#e4effd_100%)] px-px pt-[2px] pb-px text-[#15428b]">
        <RibbonGroup title="Pappersremiss" cls="w-[107px]">
          <div className="flex gap-[9px] pl-[7px]">
            <button aria-label="Röd remiss"><FormIcon color="#e8261c" /></button>
            <button aria-label="Blå remiss"><FormIcon color="#2f95ea" /></button>
            <button aria-label="Vit remiss"><FormIcon color="#ffffff" /></button>
            <button aria-label="Gul remiss"><FormIcon color="#fbe91c" /></button>
          </div>
        </RibbonGroup>
        <RibbonGroup title="Krank, Helge" cls="w-[195px]">
          <button disabled className="ml-[7px] flex items-center gap-[2px] whitespace-nowrap text-[#8d8d8d]">
            <Svg><path d="M1 .5h6l3 3V11H1zM6 5h6l3 3v7.500H6z" fill="#f5f6f8" stroke="#c2c6cc" /></Svg>
            Kopiera föregående
          </button>
          <button className="ml-[8px] flex items-center gap-[2px]"><GridIcon />Lablista</button>
        </RibbonGroup>
        <RibbonGroup title="Beställa" cls="w-[123px]">
          <button className="ml-[10px] flex items-center gap-[3px]">
            <Svg size={20}><path d="M1 9.500 3.500 8l2.500 3.500Q9 5 15 1 10 7.500 6.500 15 4 12 1 9.500z" fill="#2fc51c" stroke="#147a10" strokeWidth=".7" /></Svg>
            OK
          </button>
          <button className="ml-[11px] flex items-center gap-[3px]">
            <Svg size={21}><rect x=".5" y=".5" width="15" height="15" rx="2.500" fill="#c01712" stroke="#8a0d0a" /><path d="M2 2h12v5Q8 9 2 7z" fill="#dd5a50" opacity=".6" /><path d="m4.800 4.800 6.400 6.400M11.200 4.800l-6.400 6.400" stroke="#fff" strokeWidth="2.600" /></Svg>
            Avbryt
          </button>
        </RibbonGroup>
      </div>
      <main className="mb-[3px] grid min-h-0 flex-1 grid-cols-[661fr_353fr_346fr] grid-rows-[minmax(0,1fr)] gap-[3px]">
        <Catalog />
        <Order />
        <Article />
      </main>
      <Bottom />
      <StatusBar />
      <Taskbar />
    </div>
  );
}
